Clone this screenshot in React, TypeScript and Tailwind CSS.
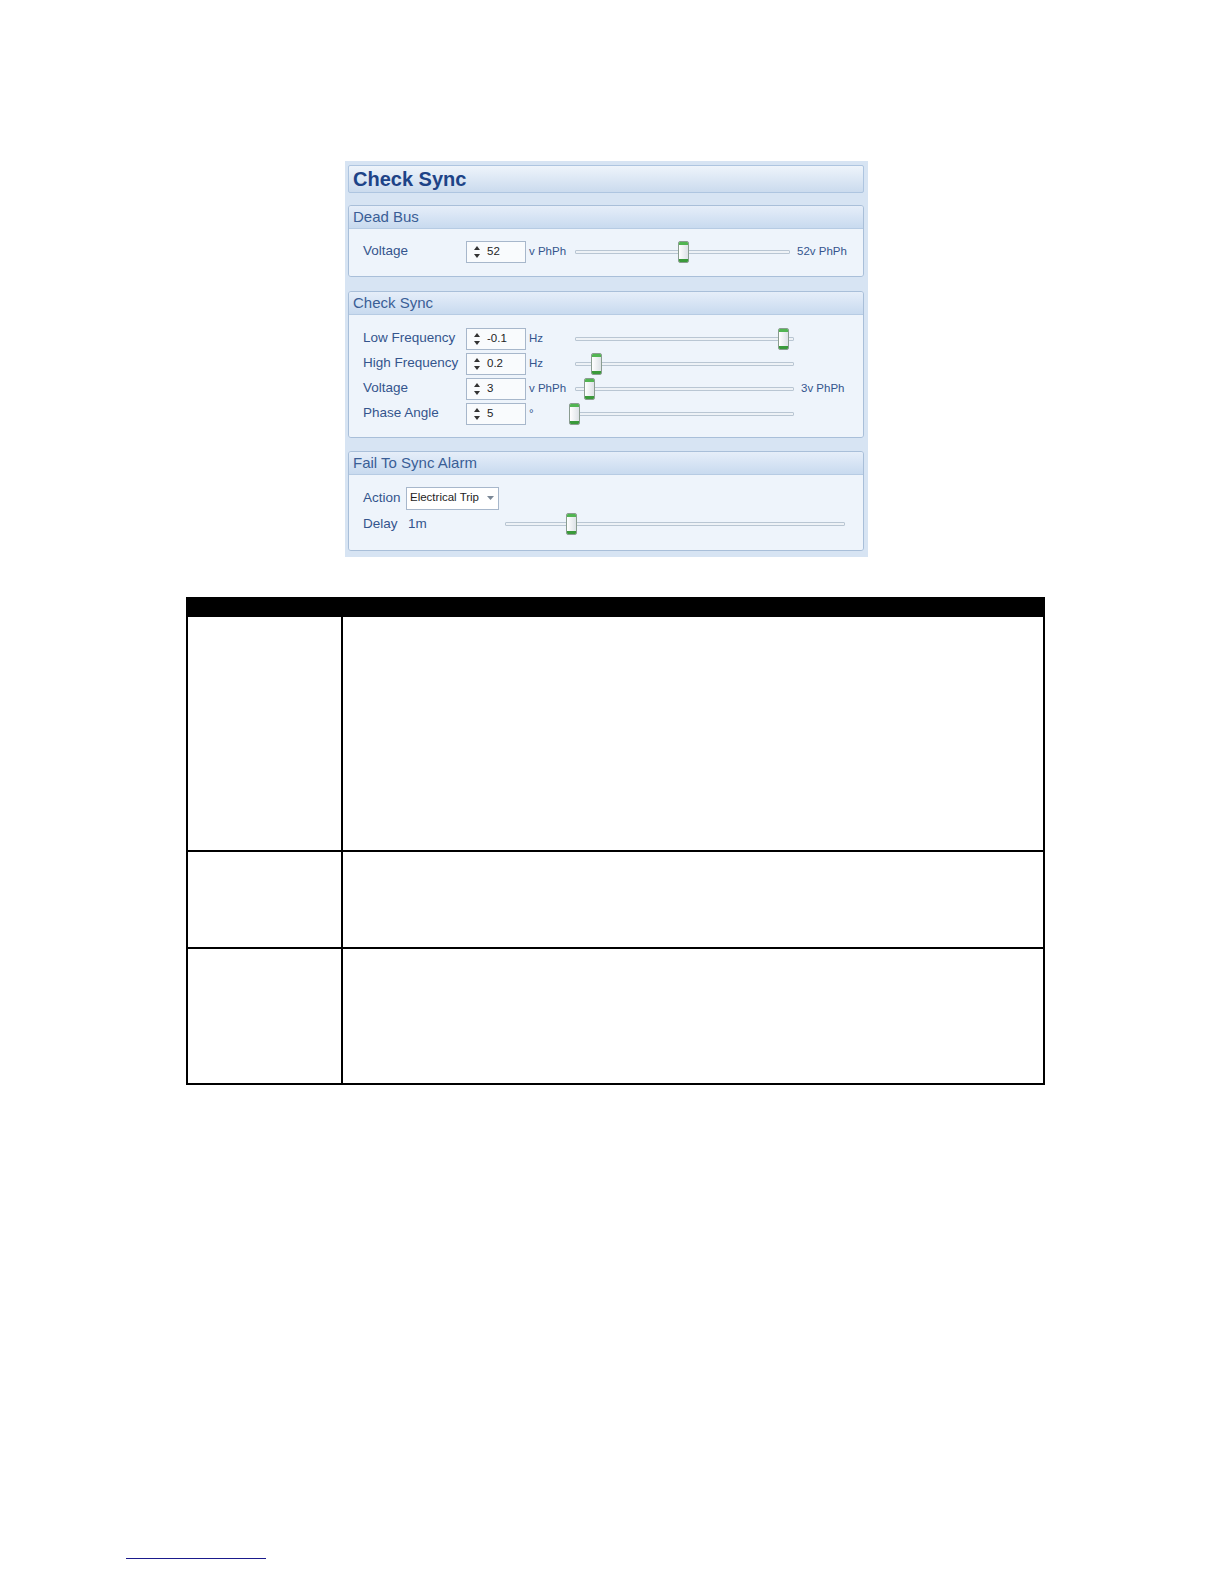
import React from "react";

const font = { fontFamily: '"Liberation Sans", Arial, sans-serif' };

function Thumb() {
  return (
    <div className="w-[11px] h-[22px] rounded-[2px] border border-[#8a9c90] bg-gradient-to-r from-[#ffffff] to-[#dde2e6] flex flex-col justify-between overflow-hidden">
      <div className="h-[3px] bg-[#52b552]" />
      <div className="h-[3px] bg-[#3a9a3a]" />
    </div>
  );
}

function Slider({ width, pos }: { width: number; pos: number }) {
  return (
    <div className="relative h-[22px] shrink-0" style={{ width }}>
      <div className="absolute left-0 right-0 top-[9px] h-[4px] border border-[#b9c6d3] bg-[#eef2f6] rounded-[1px]" />
      <div className="absolute top-0" style={{ left: pos - 5 }}>
        <Thumb />
      </div>
    </div>
  );
}

function Spin({ value }: { value: string }) {
  return (
    <div className="w-[60px] h-[22px] shrink-0 border border-[#a7b7cb] bg-[#f9fbfd] flex items-center">
      <div className="w-[20px] flex flex-col items-center justify-center gap-[4px]">
        <svg width="6" height="4" viewBox="0 0 6 4"><path d="M0 4 L3 0 L6 4 Z" fill="#333" /></svg>
        <svg width="6" height="4" viewBox="0 0 6 4"><path d="M0 0 L3 4 L6 0 Z" fill="#333" /></svg>
      </div>
      <span className="text-[11.5px] text-[#1e1e1e]">{value}</span>
    </div>
  );
}

function Row({
  label,
  value,
  unit,
  track,
  pos,
  right,
}: {
  label: string;
  value: string;
  unit: string;
  track: number;
  pos: number;
  right?: string;
}) {
  return (
    <div className="flex items-center h-[25px]">
      <div className="w-[103px] text-[13.5px] text-[#34558d] whitespace-nowrap">{label}</div>
      <Spin value={value} />
      <div className="w-[49px] pl-[3px] text-[11.5px] text-[#34558d]">{unit}</div>
      <Slider width={track} pos={pos} />
      {right && <div className="ml-[7px] text-[11.5px] text-[#34558d] whitespace-nowrap">{right}</div>}
    </div>
  );
}

function Group({ title, children, bodyClass }: { title: string; children: React.ReactNode; bodyClass: string }) {
  return (
    <div className="border border-[#a9bfd9] rounded-[3px] overflow-hidden">
      <div className="h-[23px] bg-gradient-to-b from-[#e6eef9] to-[#c8daef] border-b border-[#b6cbe3] pl-[4px] flex items-center text-[15px] text-[#3a5e96]">
        {title}
      </div>
      <div className={"bg-[#eef4fb] pl-[14px] " + bodyClass}>{children}</div>
    </div>
  );
}

export default function App() {
  return (
    <div className="w-full h-screen bg-white relative overflow-hidden" style={font}>
      <div className="pt-[161px] pl-[345px]">
        <div className="w-[523px] bg-[#d7e4f3] px-[3px] pt-[4px] pb-[6px] flex flex-col">
          <div className="h-[28px] mr-[1px] border border-[#aec5e0] rounded-[2px] bg-gradient-to-b from-[#eef4fb] to-[#cbdbee] flex items-center pl-[4px]">
            <span className="text-[20px] font-bold text-[#1d4387]">Check Sync</span>
          </div>

          <div className="mt-[12px] mr-[1px]">
            <Group title="Dead Bus" bodyClass="pt-[10px] pb-[12px]">
              <Row label="Voltage" value="52" unit="v PhPh" track={215} pos={108} right="52v PhPh" />
            </Group>
          </div>

          <div className="mt-[14px] mr-[1px]">
            <Group title="Check Sync" bodyClass="pt-[11px] pb-[11px]">
              <Row label="Low Frequency" value="-0.1" unit="Hz" track={219} pos={208} />
              <Row label="High Frequency" value="0.2" unit="Hz" track={219} pos={21} />
              <Row label="Voltage" value="3" unit="v PhPh" track={219} pos={14} right="3v PhPh" />
              <Row label="Phase Angle" value="5" unit="°" track={219} pos={-1} />
            </Group>
          </div>

          <div className="mt-[13px] mr-[1px]">
            <Group title="Fail To Sync Alarm" bodyClass="pt-[11px] pb-[13px]">
              <div className="flex items-center h-[24px]">
                <span className="text-[13.5px] text-[#34558d] w-[43px]">Action</span>
                <div className="w-[93px] h-[23px] border border-[#a7b7cb] bg-white flex items-center pl-[3px] justify-between pr-[4px]">
                  <span className="text-[11.5px] text-[#1e1e1e]">Electrical Trip</span>
                  <svg width="7" height="4" viewBox="0 0 7 4"><path d="M0 0 L7 0 L3.5 4 Z" fill="#7a8796" /></svg>
                </div>
              </div>
              <div className="flex items-center h-[26px] mt-[1px]">
                <span className="text-[13.5px] text-[#34558d] w-[45px]">Delay</span>
                <span className="text-[13.5px] text-[#34558d] w-[97px]">1m</span>
                <Slider width={340} pos={66} />
              </div>
            </Group>
          </div>
        </div>
      </div>

      <div className="mt-[40px] ml-[186px] w-[859px] border-2 border-black">
        <div className="h-[18px] bg-black" />
        <div className="flex h-[235px] border-b-2 border-black">
          <div className="w-[155px] border-r-2 border-black" />
          <div className="flex-1" />
        </div>
        <div className="flex h-[97px] border-b-2 border-black">
          <div className="w-[155px] border-r-2 border-black" />
          <div className="flex-1" />
        </div>
        <div className="flex h-[134px]">
          <div className="w-[155px] border-r-2 border-black" />
          <div className="flex-1" />
        </div>
      </div>

      <div className="absolute left-[126px] top-[1558px] w-[140px] h-[1px] bg-[#1a1a8c]" />
    </div>
  );
}
